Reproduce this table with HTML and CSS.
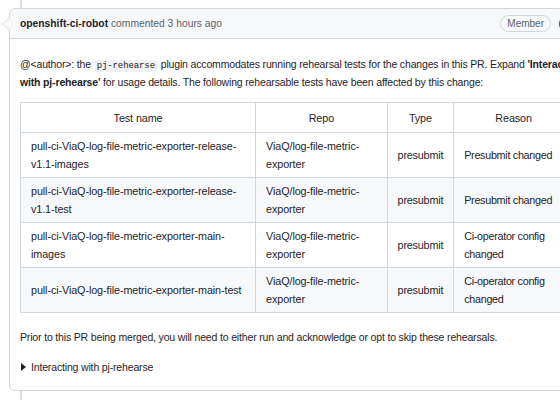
FILE: index.html
```html
<!DOCTYPE html>
<html>
<head>
<meta charset="utf-8">
<link rel="stylesheet" href="styles.css">
</head>
<body>
<div class="timeline">
  <div class="comment">
    <span class="pointer"></span>
    <div class="comment-header">
      <div class="who"><strong>openshift-ci-robot</strong> commented 3 hours ago</div>
      <div class="actions">
        <span class="badge">Member</span>
        <svg class="smile" width="16" height="16" viewBox="0 0 16 16"><circle cx="8" cy="8" r="6.5" fill="none" stroke="#59636e" stroke-width="1.3"/><circle cx="5.8" cy="6.5" r="0.9" fill="#59636e"/><circle cx="10.2" cy="6.5" r="0.9" fill="#59636e"/><path d="M5 9.5 Q8 12.5 11 9.5" fill="none" stroke="#59636e" stroke-width="1.3" stroke-linecap="round"/></svg>
      </div>
    </div>
    <div class="comment-body">
      <p class="intro">@&lt;author&gt;: the <code>pj-rehearse</code> plugin accommodates running rehearsal tests for the changes in this PR. Expand <strong>'Interacting<br>with pj-rehearse'</strong> for usage details. The following rehearsable tests have been affected by this change:</p>
      <table class="tests">
        <thead>
          <tr><th class="c-name">Test name</th><th class="c-repo">Repo</th><th class="c-type">Type</th><th class="c-reason">Reason</th></tr>
        </thead>
        <tbody>
          <tr><td>pull-ci-ViaQ-log-file-metric-exporter-release-v1.1-images</td><td>ViaQ/log-file-metric-exporter</td><td class="center">presubmit</td><td class="reason">Presubmit changed</td></tr>
          <tr><td>pull-ci-ViaQ-log-file-metric-exporter-release-v1.1-test</td><td>ViaQ/log-file-metric-exporter</td><td class="center">presubmit</td><td class="reason">Presubmit changed</td></tr>
          <tr><td>pull-ci-ViaQ-log-file-metric-exporter-main-images</td><td>ViaQ/log-file-metric-exporter</td><td class="center">presubmit</td><td class="reason">Ci-operator config changed</td></tr>
          <tr><td>pull-ci-ViaQ-log-file-metric-exporter-main-test</td><td>ViaQ/log-file-metric-exporter</td><td class="center">presubmit</td><td class="reason">Ci-operator config changed</td></tr>
        </tbody>
      </table>
      <p class="outro">Prior to this PR being merged, you will need to either run and acknowledge or opt to skip these rehearsals.</p>
      <div class="details"><span class="tri"></span>Interacting with pj-rehearse</div>
    </div>
  </div>
</div>
</body>
</html>
```
FILE: styles.css
```css
html, body {
  margin: 0;
  padding: 0;
  background: #ffffff;
  overflow: hidden;
  width: 560px;
  height: 400px;
}
body {
  font-family: "Liberation Sans", Arial, sans-serif;
  font-size: 10.5px;
  letter-spacing: -0.16px;
  color: #1f2328;
}
.timeline {
  position: relative;
  width: 700px;
  padding: 8px 0 10px 9px;
  background: linear-gradient(#d8dee4, #d8dee4) no-repeat 20px 0 / 2px 100%;
}
.comment {
  position: relative;
  width: 574px;
  border: 1px solid #d0d7de;
  border-radius: 6px;
  background: #fff;
}
.pointer {
  position: absolute;
  left: -8px;
  top: 8px;
  width: 0;
  height: 0;
  border-top: 7px solid transparent;
  border-bottom: 7px solid transparent;
  border-right: 8px solid #d0d7de;
}
.pointer::after {
  content: "";
  position: absolute;
  left: 1px;
  top: -6px;
  border-top: 6px solid transparent;
  border-bottom: 6px solid transparent;
  border-right: 7px solid #f6f8fa;
}
.comment-header {
  display: flex;
  align-items: center;
  justify-content: space-between;
  height: 29px;
  padding: 0 10px;
  background: #f6f8fa;
  border-bottom: 1px solid #d0d7de;
  border-radius: 6px 6px 0 0;
  color: #59636e;
  font-size: 10.3px;
  letter-spacing: 0;
}
.who strong {
  color: #1f2328;
  font-weight: bold;
}
.actions {
  display: flex;
  align-items: center;
  gap: 7px;
}
.badge {
  border: 1px solid #d0d7de;
  border-radius: 10px;
  padding: 1px 6px;
  font-size: 10px;
  line-height: 13px;
  color: #59636e;
}
.smile {
  display: block;
}
.comment-body {
  padding: 16px 10px 14px 10px;
}
p {
  margin: 0;
  line-height: 18px;
}
.intro {
  margin-bottom: 11px;
  white-space: nowrap;
}
code {
  font-family: "Liberation Mono", monospace;
  font-size: 9px;
  line-height: 1;
  letter-spacing: -0.1px;
  background: #eff1f3;
  border-radius: 4px;
  padding: 1px 3px;
}
.tests {
  border-collapse: collapse;
  line-height: 18px;
  font-size: 10.8px;
  letter-spacing: -0.1px;
  margin-bottom: 15px;
}
.tests th, .tests td {
  border: 1px solid #d0d7de;
  padding: 4px 10px;
}
.tests th {
  font-weight: normal;
  padding: 6px 10px 5px;
  text-align: center;
}
.tests tbody tr:nth-child(even) {
  background: #f6f8fa;
}
.c-name { width: 218px; }
.c-repo { width: 112px; }
.c-type { width: 42px; }
.c-reason { width: 100px; }
.center { text-align: center; letter-spacing: -0.2px; }
.reason { padding-left: 9px; letter-spacing: -0.3px; }
.outro {
  margin-bottom: 12px;
}
.details {
  display: flex;
  align-items: center;
  line-height: 18px;
}
.tri {
  width: 0;
  height: 0;
  border-top: 4px solid transparent;
  border-bottom: 4px solid transparent;
  border-left: 5px solid #1f2328;
  margin-right: 5px;
  margin-left: 1px;
}
```
